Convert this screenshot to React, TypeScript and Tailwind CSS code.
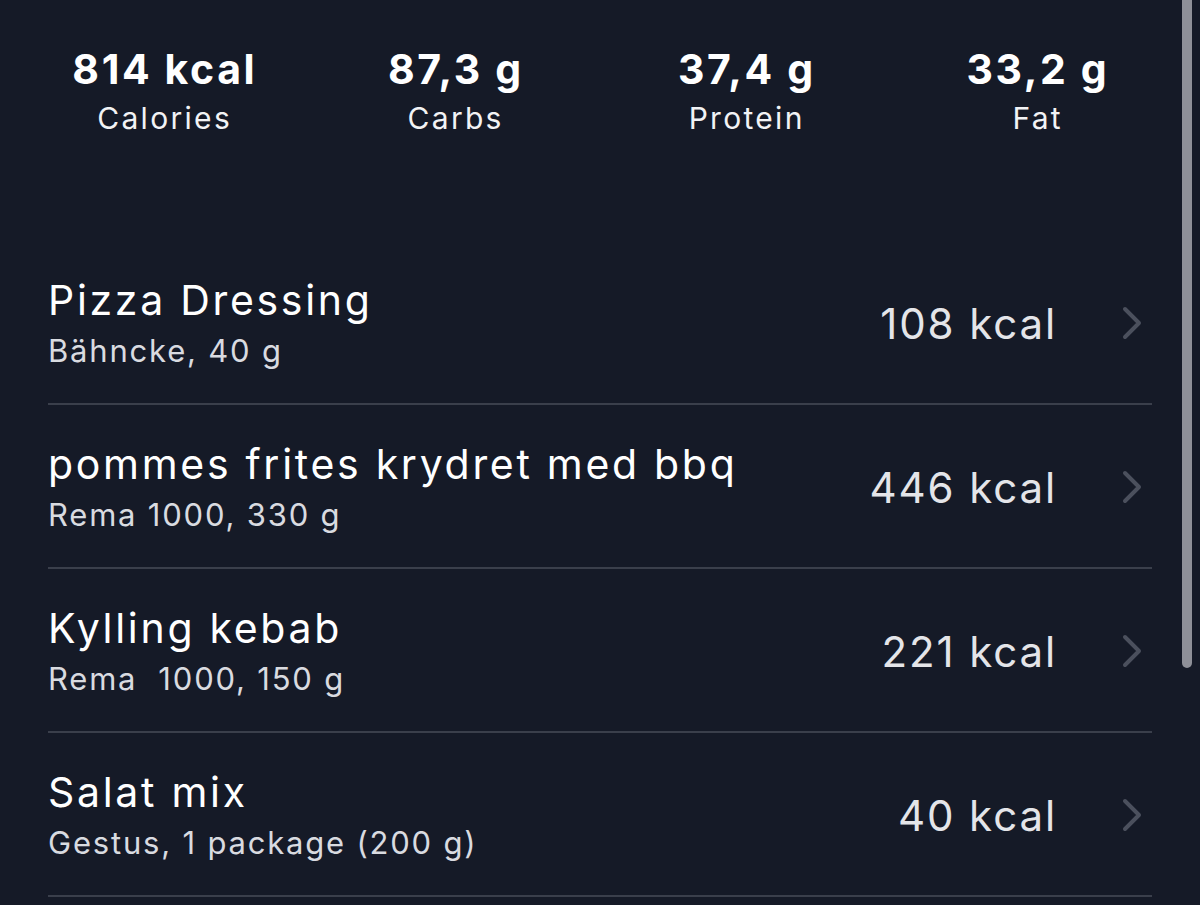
import React from "react";

const stats = [
  { value: "814 kcal", label: "Calories" },
  { value: "87,3 g", label: "Carbs" },
  { value: "37,4 g", label: "Protein" },
  { value: "33,2 g", label: "Fat" },
];

const items = [
  { name: "Pizza Dressing", sub: "Bähncke, 40 g", kcal: "108 kcal" },
  { name: "pommes frites krydret med bbq", sub: "Rema 1000, 330 g", kcal: "446 kcal" },
  { name: "Kylling kebab", sub: "Rema\u00a0 1000, 150 g", kcal: "221 kcal" },
  { name: "Salat mix", sub: "Gestus, 1 package (200 g)", kcal: "40 kcal" },
];

function Chevron() {
  return (
    <svg width="24" height="36" viewBox="0 0 24 36" fill="none">
      <path d="M5 4 L19 18 L5 32" stroke="#4b505d" strokeWidth="4" strokeLinecap="round" strokeLinejoin="round" />
    </svg>
  );
}

export default function App() {
  return (
    <div
      className="w-[1200px] h-[905px] overflow-hidden bg-[#151a27] flex"
      style={{ fontFamily: "Inter, 'Noto Sans', sans-serif" }}
    >
      <div className="w-[1182px] flex flex-col">
        <div className="flex pl-[18px] pt-[44px]">
          {stats.map((s) => (
            <div key={s.label} className="flex-1 flex flex-col items-center">
              <div className="text-[41px] leading-[50px] font-bold text-white tracking-[2.6px] pl-[2.6px]">{s.value}</div>
              <div className="text-[30px] leading-[40px] text-[#f2f3f5] mt-[4px] tracking-[2.3px] pl-[2.3px]">{s.label}</div>
            </div>
          ))}
        </div>
        <div className="mt-[103px] pl-[48px] pr-[30px]">
          {items.map((it) => (
            <div key={it.name} className="h-[164px] flex items-center border-b-2 border-[#3a3f4b]">
              <div className="flex-1 flex flex-col">
                <div className="text-[41px] leading-[48px] text-white tracking-[2.7px]">{it.name}</div>
                <div className="text-[31px] leading-[36px] mt-[9px] text-[#d9dbe0] tracking-[1.8px]">{it.sub}</div>
              </div>
              <div className="text-[42px] leading-[50px] mt-[4px] text-[#e4e5e9] mr-[63px] tracking-[1.9px]">{it.kcal}</div>
              <div className="mr-[8px] flex items-center mt-[2px]">
                <Chevron />
              </div>
            </div>
          ))}
        </div>
      </div>
      <div className="w-[10px] h-[668px] bg-[#8e9098] rounded-b-full" />
    </div>
  );
}
